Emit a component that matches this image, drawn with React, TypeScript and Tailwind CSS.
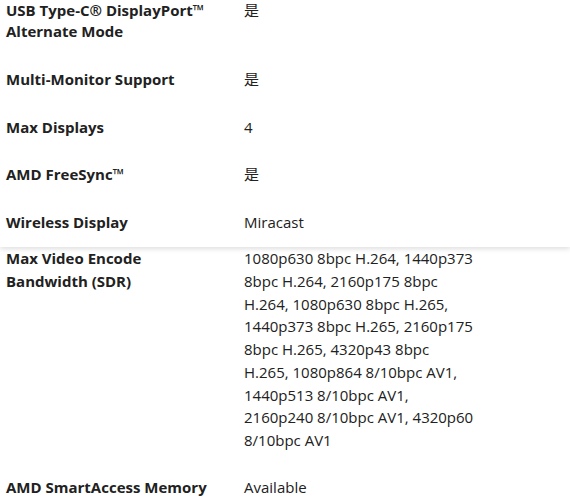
type Spec = {
  label: string;
  value: string;
};

// rows that sit in the pinned panel at the top
const pinned: Spec[] = [
  { label: "Multi-Monitor Support", value: "是" },
  { label: "Max Displays", value: "4" },
  { label: "AMD FreeSync™", value: "是" },
  { label: "Wireless Display", value: "Miracast" },
];

// encode bandwidth, broken the way the page wraps it
const encodeLines = [
  "1080p630 8bpc H.264, 1440p373",
  "8bpc H.264, 2160p175 8bpc",
  "H.264, 1080p630 8bpc H.265,",
  "1440p373 8bpc H.265, 2160p175",
  "8bpc H.265, 4320p43 8bpc",
  "H.265, 1080p864 8/10bpc AV1,",
  "1440p513 8/10bpc AV1,",
  "2160p240 8/10bpc AV1, 4320p60",
  "8/10bpc AV1",
];

function Row({ label, value }: Spec) {
  return (
    <div className="grid grid-cols-[238px_234px] py-[12px] pl-[6px]">
      <div className="pr-[30px] font-bold leading-[23.5px]">{label}</div>
      <div className="leading-[23.5px]">{value}</div>
    </div>
  );
}

export default function App() {
  return (
    <div className="min-h-[499px] w-[570px] overflow-hidden bg-white font-['Open_Sans','Noto_Sans_CJK_SC',sans-serif] text-[15px] text-[#212121]">
      {/* pinned panel */}
      <div className="relative z-10 bg-white pb-[1px] shadow-[0_2px_5px_rgba(0,0,0,0.13)]">
        <div className="grid grid-cols-[238px_234px] pb-[14px] pl-[6px]">
          <div className="pr-[30px] font-bold leading-[21px]">
            USB Type-C® DisplayPort™ Alternate Mode
          </div>
          <div className="leading-[21px]">是</div>
        </div>
        {pinned.map((row) => (
          <Row key={row.label} label={row.label} value={row.value} />
        ))}
      </div>

      <div className="grid grid-cols-[238px_260px] pb-[12px] pl-[6px]">
        <div className="pr-[30px] font-bold leading-[22.75px]">
          Max Video Encode Bandwidth (SDR)
        </div>
        <div className="leading-[22.75px]">
          {encodeLines.map((line) => (
            <div key={line} className="whitespace-nowrap">
              {line}
            </div>
          ))}
        </div>
      </div>
      <Row label="AMD SmartAccess Memory" value="Available" />
    </div>
  );
}
